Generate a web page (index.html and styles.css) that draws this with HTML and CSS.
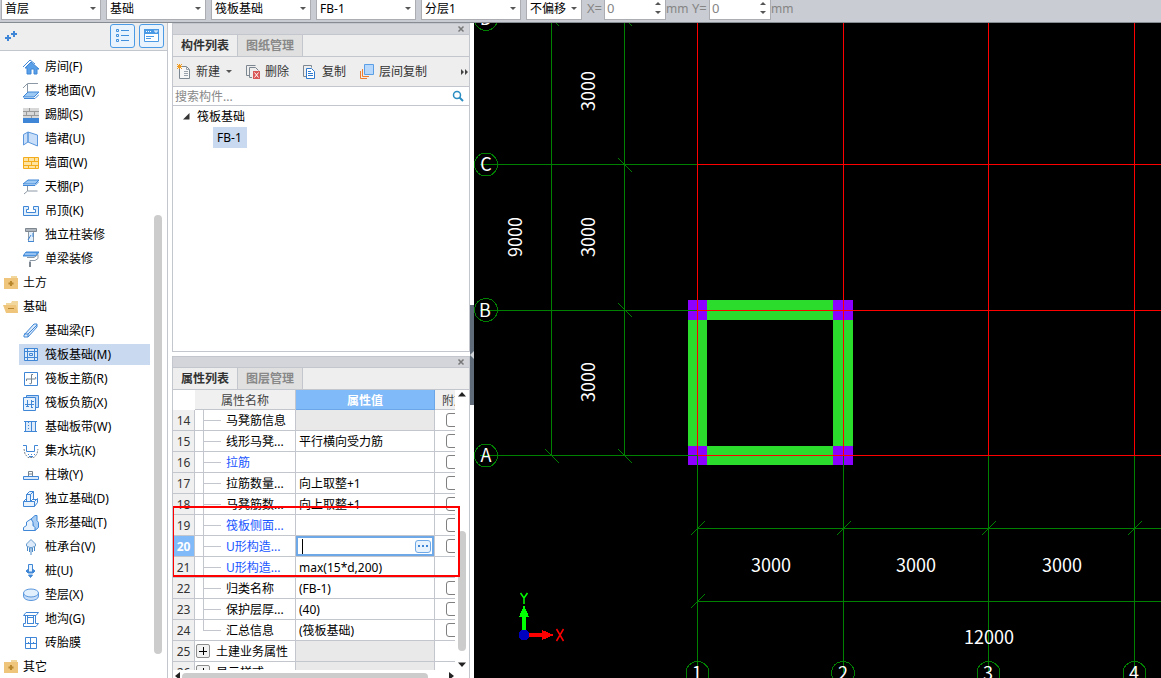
FILE: index.html
```html
<!DOCTYPE html>
<html lang="zh-CN">
<head>
<meta charset="utf-8">
<title>筏板基础</title>
<link rel="stylesheet" href="styles.css">
</head>
<body>
<header class="topbar">
  <span class="combo"><select aria-label="楼层"><option>首层</option></select></span>
  <span class="combo"><select aria-label="分类"><option>基础</option></select></span>
  <span class="combo"><select aria-label="构件类型"><option>筏板基础</option></select></span>
  <span class="combo"><select aria-label="构件"><option>FB-1</option></select></span>
  <span class="combo"><select aria-label="分层"><option>分层1</option></select></span>
  <span class="combo combo-small"><select aria-label="偏移"><option>不偏移</option></select></span>
  <div class="offsets">
    <label for="off-x">X=</label><span class="spin"><input id="off-x" type="text" value="0"></span><span class="unit">mm</span>
    <label for="off-y">Y=</label><span class="spin"><input id="off-y" type="text" value="0"></span><span class="unit">mm</span>
  </div>
</header>
<main class="work">
  <nav class="sidebar">
    <div class="side-head">
      <svg class="plus" width="14" height="14" viewBox="0 0 14 14"><path d="M0 9h6M3 6v6M6 5h6M9 2v6" stroke="#3f87d6" stroke-width="2"/></svg>
      <button class="view" aria-label="列表"><svg width="16" height="16" viewBox="0 0 16 16" fill="none" stroke="#3f8fdc"><path d="M1.500 1.500h2v2h-2zM1.500 6.500h2v2h-2zM1.500 11.500h2v2h-2zM6 2.500h8M6 7.500h8M6 12.500h8"/></svg></button>
      <button class="view" aria-label="窗口"><svg width="16" height="16" viewBox="0 0 16 16" fill="none"><path d="M.5 1.500h14v12H.5z" fill="#fff" stroke="#4a9ae6"/><path d="M0 1h15v5H0z" fill="#4a9ae6"/><path d="M2 3.500h1M4 3.500h1M6 3.500h1M10 3h4M12 3v2" stroke="#fff"/><path d="M2 8.500h8M2 10.500h5" stroke="#4a9ae6"/></svg></button>
    </div>
    <div class="side-body">
      <ul class="items">
        <li><a href="#"><svg viewBox="0 0 16 16"><path d="M0 8L7 1l5 4" fill="none" stroke="#3f87d6"/><path d="M2 9l6-6 8 7h-2v5h-3v-5H8v5H4V9z" fill="#5aa0e8" stroke="#3f87d6"/></svg>房间(F)</a></li>
        <li><a href="#"><svg viewBox="0 0 16 16" fill="none"><path d="M15 .5H4.500V10M4 1L0 5" stroke="#8c98a5"/><path d="M5 9h11l-5 5H0z" fill="#9cc8f4" stroke="#3f87d6"/><path d="M1 15.500h11l4-4" stroke="#3f87d6"/></svg>楼地面(V)</a></li>
        <li><a href="#"><svg viewBox="0 0 16 16"><path d="M0 1h16v10H0z" fill="#d8d8d8"/><path d="M0 4.500h16M0 8.500h16M6.500 1v3M11.500 4v4M3.500 4v4M8.500 8v3" stroke="#9a9a9a"/><path d="M0 11h16v5H0z" fill="#3f87d6"/></svg>踢脚(S)</a></li>
        <li><a href="#"><svg viewBox="0 0 16 16" fill="#c9def8" stroke="#5a97dd"><path d="M.5 3.500L5 1v10L.5 14zM5 1l9.500 3v11L5 11z"/></svg>墙裙(U)</a></li>
        <li><a href="#"><svg viewBox="0 0 16 16"><path d="M.5 2.500h15v11H.5z" fill="#ffe3a0" stroke="#f3ac1c"/><path d="M0 6.500h16M0 10.500h16M5.500 2v4M11.500 2v4M8.500 6v4M5.500 10v4M12.500 10v4" stroke="#f3ac1c"/></svg>墙面(W)</a></li>
        <li><a href="#"><svg viewBox="0 0 16 16" fill="none"><path d="M5 1h11l-4 4H0z" fill="#9cc8f4" stroke="#3f87d6"/><path d="M0 6.500h12l4-4" stroke="#3f87d6"/><path d="M4.500 7v5h10M4.500 12L1 15" stroke="#8c98a5"/></svg>天棚(P)</a></li>
        <li><a href="#"><svg viewBox="0 0 16 16"><path d="M.5 3.500h5v3h-2v3h9v-3h-2v-3h5v9H.5z" fill="#e2effc" stroke="#3f87d6"/></svg>吊顶(K)</a></li>
        <li><a href="#"><svg viewBox="0 0 16 16"><path d="M2.500 1.500h11v3h-11z" fill="#aeb5bd" stroke="#7e8790"/><path d="M5.500 5v9.500h5V5" fill="#e2effc" stroke="#8c98a5"/><path d="M5 14.500h6M8 8l-3 5M10 6v4" stroke="#3f87d6"/></svg>独立柱装修</a></li>
        <li><a href="#"><svg viewBox="0 0 16 16" fill="none"><path d="M3 1h13l-3 4H0z" fill="#5aa0e8" stroke="#3f87d6"/><path d="M2 3h11" stroke="#cfe2f8"/><path d="M4 6.500h7l4-3v4l-3 2H7v3" stroke="#8c98a5"/><path d="M7 11v5" stroke="#7e8790" stroke-width="2"/></svg>单梁装修</a></li>
        <li class="group"><a href="#"><svg viewBox="0 0 16 16"><path d="M8 1h6v3H8z" fill="#f2d79c"/><path d="M1 3h14v11H1z" fill="#eec57a"/><path d="M8 6v5M5.500 8.500h5" stroke="#b8862c" stroke-width="2"/></svg>土方</a></li>
        <li class="group"><a href="#"><svg viewBox="0 0 16 16"><path d="M3 4h5l1-2h6v12H3z" fill="#f2d79c"/><path d="M0 6h13l2 8H3z" fill="#eec57a"/><path d="M5 9.500h6" stroke="#b8862c"/></svg>基础</a></li>
        <li><a href="#"><svg viewBox="0 0 16 16"><path d="M1 12L11 1h3v3L5 14H1z" fill="#dceafa" stroke="#3f87d6"/><path d="M1 11h4v3M5 11l9-9" fill="none" stroke="#3f87d6"/></svg>基础梁(F)</a></li>
        <li class="selected"><a href="#"><svg viewBox="0 0 16 16"><path d="M1.500 1.500h13v12h-13z" fill="#dceafa" stroke="#3f87d6"/><path d="M4.500 1v13M11.500 1v13M1 4.500h14M1 10.500h14M6.500 6.500h3v2h-3z" fill="none" stroke="#3f87d6"/></svg>筏板基础(M)</a></li>
        <li><a href="#"><svg viewBox="0 0 16 16" fill="none"><path d="M1.500 1.500h13v13h-13z" stroke="#3f87d6"/><path d="M10 3.500H8.500V12q0 1.500-2 .5M3.500 10V8H12q1.500 0 .5-2" stroke="#75838f"/></svg>筏板主筋(R)</a></li>
        <li><a href="#"><svg viewBox="0 0 16 16"><path d="M3.500.5h12v12h-12z" fill="#bcd8f6" stroke="#3f87d6"/><path d="M.5 2.500h12v13H.5z" fill="#e8f2fd" stroke="#3f87d6"/><path d="M4.500 5v7M8.500 5v7M2 9.500h9M3 11.500h3M8 6.500h3M8 12.500h2" fill="none" stroke="#3f87d6"/></svg>筏板负筋(X)</a></li>
        <li><a href="#"><svg viewBox="0 0 16 16"><path d="M3 3h9v10H3z" fill="#dceafa"/><path d="M1 2.500h13M1 12.500h13M2.500 3v10M8.500 3v10M12.500 3v10" stroke="#3f87d6"/><path d="M5.500 3v10" stroke="#3f87d6" stroke-dasharray="1 2"/></svg>基础板带(W)</a></li>
        <li><a href="#"><svg viewBox="0 0 16 16" fill="none"><path d="M0 2.500h3.500v6h8v-6H15" stroke="#3f87d6"/><path d="M1 6l1 5 3 3.500h6l3-3.500 1-5" stroke="#75838f" stroke-dasharray="2 1"/><path d="M5 11.500h1M8 11.500h1M11 11.500h1M6 13.500h4" stroke="#3f87d6"/></svg>集水坑(K)</a></li>
        <li><a href="#"><svg viewBox="0 0 16 16"><path d="M5.500 9.500V4.500h4v5M6 7h4" fill="none" stroke="#75838f"/><path d="M.5 9.500h15v3H.5z" fill="#dceafa" stroke="#3f87d6"/></svg>柱墩(Y)</a></li>
        <li><a href="#"><svg viewBox="0 0 16 16" fill="#e8f2fd" stroke="#3f87d6"><path d="M.5 10.500h11v5H.5zM11.500 10.500l3-3v4l-3 4M.5 10.500l3-3M3.500 10.500v-7l3-3h4v8M3.500 3.500h4v7l3-3M7.500 3.500l3-3M10 8.500h4"/></svg>独立基础(D)</a></li>
        <li><a href="#"><svg viewBox="0 0 16 16" fill="#e8f2fd" stroke="#3f87d6"><path d="M8 4l4-3.500h2v5l1.500 2v5l-3.500 3z" fill="#a9cdf3"/><path d="M.5 15.500v-3l3-2V7L8 4l2 3v3.500l2 2v3z"/></svg>条形基础(T)</a></li>
        <li><a href="#"><svg viewBox="0 0 16 16"><path d="M8 .5L12.500 5v2L8 9 3.500 7V5z" fill="#dceafa" stroke="#6c9fce"/><path d="M8 8v8M4.500 8v4M11.500 8v4M6.500 9v4M9.500 9v4" stroke="#4a89c8"/></svg>桩承台(V)</a></li>
        <li><a href="#"><svg viewBox="0 0 16 16" stroke="#3f87d6"><path d="M5.500 1.500h4v8h-4z" fill="#e8f2fd"/><path d="M5.500 6L3 8l2 2h5l2-2-2.500-2v3h-4z" fill="#3f87d6"/><path d="M5.500 12h4l-2 2.500z" fill="#3f87d6"/></svg>桩(U)</a></li>
        <li><a href="#"><svg viewBox="0 0 16 16" fill="#c9def8" stroke="#5a97dd"><path d="M.5 6v3c0 6 15 6 15 0V6"/><ellipse cx="8" cy="6" rx="7.500" ry="4" fill="#e2effc"/></svg>垫层(X)</a></li>
        <li><a href="#"><svg viewBox="0 0 16 16" fill="none" stroke="#3f87d6"><path d="M3 1.500h12.500l-2.500 3H.5z" fill="#fff"/><path d="M2.500 5v7.500h-2v3H13l2.500-3H12.500V5M4.500 5v8M10.500 5v8M5 6.500h5M5 12.500h5"/></svg>地沟(G)</a></li>
        <li><a href="#"><svg viewBox="0 0 16 16" fill="none" stroke="#3f87d6"><path d="M2.500 2.500h11v11h-11zM7.500 2v12M2 8.500h12"/><path d="M5 7.500h1M10 7.500h1"/></svg>砖胎膜</a></li>
        <li class="group"><a href="#"><svg viewBox="0 0 16 16"><path d="M8 1h6v3H8z" fill="#f2d79c"/><path d="M1 3h14v11H1z" fill="#eec57a"/><path d="M8 6v5M5.500 8.500h5" stroke="#b8862c" stroke-width="2"/></svg>其它</a></li>
      </ul>
      <div class="side-scroll"><div class="thumb"></div></div>
    </div>
  </nav>

  <div class="docks">
    <section class="panel panel-list">
      <div class="strip"><button class="close" aria-label="关闭"><svg width="8" height="8" viewBox="0 0 8 8"><path d="M1.500 1.500l5 5M6.500 1.500l-5 5" stroke="#777" stroke-width="1.500"/></svg></button></div>
      <div class="tabs"><button class="tab active">构件列表</button><button class="tab">图纸管理</button></div>
      <div class="tools">
        <button class="tool"><svg width="16" height="16" viewBox="0 0 16 16"><path d="M2.500 3.500v11h10v-9l-3-3H5" fill="#f6f6f6" stroke="#7c8791"/><path d="M9.500 2.500v3h3M7 7.500h4M7 9.500h4M7 11.500h4" fill="none" stroke="#9aa3ab"/><path d="M0 0l5 5M5 0L0 5M2.500 0v5M0 2.500h5" stroke="#f09a20"/></svg>新建<i class="caret"></i></button>
        <button class="tool"><svg width="16" height="16" viewBox="0 0 16 16" fill="none"><path d="M3 11.500H.5V1.500h9M6 13.500H3.500v-10h6l3 3" stroke="#7c8791"/><path d="M7 7h7v8H7z" fill="#d95757"/><path d="M8.500 8.500l4 5M12.500 8.500l-4 5" stroke="#fff"/></svg>删除</button>
        <button class="tool"><svg width="16" height="16" viewBox="0 0 16 16" fill="none"><path d="M3 12.500H.5v-11h8v2" stroke="#7c8791"/><path d="M3.500 4.500h5l3 3v7h-8z" fill="#fff" stroke="#2f79cf"/><path d="M5 7.500h3M5 9.500h5M5 11.500h5" stroke="#2f79cf"/></svg>复制</button>
        <button class="tool"><svg width="16" height="16" viewBox="0 0 16 16" fill="none"><path d="M.5 7v7.500H7M2.500 5v7.500H9" stroke="#ed7d31"/><path d="M4.500.5h9v10h-9z" fill="#b7d8fb" stroke="#5a9ee6"/></svg>层间复制</button>
        <button class="more" aria-label="更多"><svg width="8" height="6" viewBox="0 0 8 6"><path d="M0 0l3 3-3 3zM4 0l3 3-3 3z" fill="#444"/></svg></button>
      </div>
      <div class="search">
        <input type="text" aria-label="搜索构件" placeholder="搜索构件...">
        <svg width="12" height="12" viewBox="0 0 12 12" fill="none" stroke="#2a8cc0"><circle cx="5" cy="5" r="3.500" stroke-width="1.500"/><path d="M7.500 7.500L11 11" stroke-width="2"/></svg>
      </div>
      <div class="tree">
        <div class="node"><svg width="7" height="7" viewBox="0 0 7 7"><path d="M6.500 0v6.500H0z" fill="#333"/></svg>筏板基础</div>
        <div class="node child"><span class="picked">FB-1</span></div>
      </div>
    </section>

    <section class="panel panel-props">
      <div class="strip"><button class="close" aria-label="关闭"><svg width="8" height="8" viewBox="0 0 8 8"><path d="M1.500 1.500l5 5M6.500 1.500l-5 5" stroke="#777" stroke-width="1.500"/></svg></button></div>
      <div class="tabs"><button class="tab active">属性列表</button><button class="tab">图层管理</button></div>
      <div class="grid-area">
        <div class="grid-clip">
          <table class="props">
            <colgroup><col class="c-no"><col class="c-name"><col class="c-value"><col class="c-extra"></colgroup>
            <thead><tr><td class="corner"></td><th>属性名称</th><th class="hot">属性值</th><th class="extra">附加</th></tr></thead>
            <tbody>
              <tr><th>14</th><td class="leaf">马凳筋信息</td><td class="off"></td><td class="extra"><input type="checkbox" aria-label="附加 14"></td></tr>
              <tr><th>15</th><td class="leaf">线形马凳...</td><td>平行横向受力筋</td><td class="extra"><input type="checkbox" aria-label="附加 15"></td></tr>
              <tr><th>16</th><td class="leaf blue">拉筋</td><td></td><td class="extra"><input type="checkbox" aria-label="附加 16"></td></tr>
              <tr><th>17</th><td class="leaf">拉筋数量...</td><td>向上取整+1</td><td class="extra"><input type="checkbox" aria-label="附加 17"></td></tr>
              <tr><th>18</th><td class="leaf">马凳筋数...</td><td>向上取整+1</td><td class="extra"><input type="checkbox" aria-label="附加 18"></td></tr>
              <tr><th>19</th><td class="leaf blue">筏板侧面...</td><td></td><td class="extra"><input type="checkbox" aria-label="附加 19"></td></tr>
              <tr><th class="current">20</th><td class="leaf blue">U形构造...</td><td class="editing"><div class="editor"><i class="cursor"></i><input type="text" aria-label="U形构造"><button class="dots" aria-label="更多"><svg width="10" height="2" viewBox="0 0 10 2"><path d="M0 0h2v2H0zM4 0h2v2H4zM8 0h2v2H8z" fill="#3f87d6"/></svg></button></div></td><td class="extra"><input type="checkbox" aria-label="附加 20"></td></tr>
              <tr><th>21</th><td class="leaf blue">U形构造...</td><td>max(15*d,200)</td><td class="extra"></td></tr>
              <tr><th>22</th><td class="leaf">归类名称</td><td>(FB-1)</td><td class="extra"><input type="checkbox" aria-label="附加 22"></td></tr>
              <tr><th>23</th><td class="leaf">保护层厚...</td><td>(40)</td><td class="extra"><input type="checkbox" aria-label="附加 23"></td></tr>
              <tr><th>24</th><td class="leaf last">汇总信息</td><td>(筏板基础)</td><td class="extra"><input type="checkbox" aria-label="附加 24"></td></tr>
              <tr><th>25</th><td class="branch"><button class="expand" aria-label="展开"></button>土建业务属性</td><td class="off"></td><td class="extra"></td></tr>
              <tr><th>26</th><td class="branch"><button class="expand" aria-label="展开"></button>显示样式</td><td class="off"></td><td class="extra"></td></tr>
            </tbody>
          </table>
        </div>
        <div class="vscroll"><svg width="8" height="5" viewBox="0 0 8 5"><path d="M0 4.500L4 0l4 4.500z" fill="#222"/></svg><div class="vtrack"><div class="vthumb"></div></div><svg width="8" height="5" viewBox="0 0 8 5"><path d="M0 .5h8L4 5z" fill="#222"/></svg></div>
        <div class="mark"></div>
      </div>
      <div class="hscroll"><svg width="5" height="8" viewBox="0 0 5 8"><path d="M5 0v8L0 4z" fill="#222"/></svg><div class="htrack"><div class="hthumb"></div></div><svg width="5" height="8" viewBox="0 0 5 8"><path d="M0 0v8l5-4z" fill="#222"/></svg></div>
    </section>
  </div>

  <div class="splitter"><button class="fold" aria-label="折叠"><svg width="4" height="8" viewBox="0 0 4 8"><path d="M4 0v8L0 4z" fill="#cfd3d8"/></svg></button></div>

  <section class="viewport">
    <svg class="drawing" width="100%" height="100%">
      <g transform="translate(-474 -23)">
        <path fill="#2cdc2c" d="M688 300h165v20H688zM688 446h165v19H688zM688 320h19v126h-19zM833 320h20v126h-20z"/>
        <path fill="#8c00ff" d="M688 300h19v20h-19zM833 300h20v20h-20zM688 446h19v19h-19zM833 446h20v19h-20z"/>
        <g fill="none" stroke="#008000">
          <path d="M551.500 0v456M624.500 0v456M480 164.500h218M480 310.500h218M480 455.500h218M697.500 455v220M843.500 455v218M988.500 455v218M1134.500 455v218M697 528.500h3000M697 601.500h3000"/>
          <path d="M545 12l14 14M618 12l14 14M618 158l14 14M618 303l14 14M618 449l14 14M545 449l14 14M691 535l14-14M691 608l14-14M837 535l14-14M982 535l14-14M1128 535l14-14"/>
          <circle cx="486" cy="19" r="11.500"/><circle cx="486" cy="164.500" r="11.500"/><circle cx="486" cy="310" r="11.500"/><circle cx="486" cy="455.500" r="11.500"/><circle cx="697.500" cy="673" r="11.500"/><circle cx="843" cy="673" r="11.500"/><circle cx="988.500" cy="673" r="11.500"/><circle cx="1134.500" cy="673" r="11.500"/>
        </g>
        <path stroke="#ff0000" fill="none" d="M697.500 0v455M843.500 0v455M988.500 0v455M1134.500 0v455M698 164.500h3000M698 310.500h3000M698 455.500h3000"/>
        <g class="dims">
          <text x="486" y="25">D</text><text x="486" y="171">C</text><text x="485" y="317">B</text><text x="486" y="462">A</text>
          <text x="697" y="680">1</text><text x="843" y="680">2</text><text x="988" y="680">3</text><text x="1134" y="680">4</text>
          <text x="771" y="572">3000</text><text x="916" y="572">3000</text><text x="1062" y="572">3000</text><text x="989" y="644">12000</text>
          <text transform="translate(595 91) rotate(-90)">3000</text><text transform="translate(595 237) rotate(-90)">3000</text><text transform="translate(595 382) rotate(-90)">3000</text><text transform="translate(522 237) rotate(-90)">9000</text>
        </g>
        <path d="M522 617h4v14h-4zM519 617l5-12 5 12z" fill="#00ff00"/>
        <path d="M528 633h14v4h-14zM542 630l12 5-12 5z" fill="#ff0000"/>
        <circle cx="524" cy="635" r="5.500" fill="#0000c0"/>
        <path class="axis" d="M520.500 593l3.500 5v6M527.500 593l-3.500 5" stroke="#00ff00"/>
        <path class="axis" d="M556.500 629l7 12M563.500 629l-7 12" stroke="#ff0000"/>
      </g>
    </svg>
  </section>
</main>
</body>
</html>
```
FILE: styles.css
```css
* { box-sizing: border-box; }
html, body { height: 100%; }
body {
  margin: 0;
  display: flex;
  flex-direction: column;
  overflow: hidden;
  background: #fff;
  color: #000;
  font: 12px/20px "Noto Sans", "Noto Sans CJK SC", sans-serif;
}
button, input, select { font: inherit; color: inherit; margin: 0; padding: 0; border: 0; background: none; outline: 0; }
a { color: inherit; text-decoration: none; }
svg { flex: none; display: block; }
ul { list-style: none; margin: 0; padding: 0; }

/* top bar */
.topbar {
  flex: none;
  display: flex;
  align-items: flex-start;
  gap: 5px;
  height: 23px;
  padding-left: 1px;
  background: #c9ccd2;
  border-bottom: 1px solid #868c92;
  overflow: hidden;
}
.combo { position: relative; flex: none; width: 100px; height: 20px; background: #fff; border: 1px solid #abadb3; border-top: 0; }
.combo-small { width: 56px; }
.combo select { appearance: none; display: block; width: 100%; height: 17px; padding-left: 3px; line-height: 17px; }
.combo::after { content: ""; position: absolute; right: 4px; top: 7px; border: 3px solid transparent; border-top-color: #555; border-bottom: 0; }
.offsets { display: flex; height: 17px; line-height: 17px; color: #858585; white-space: nowrap; }
.offsets label { width: 17px; font-size: 13px; }
.spin { position: relative; width: 62px; height: 20px; background: #fff; border: 1px solid #abadb3; border-top: 0; }
.spin input { display: block; width: 44px; height: 17px; padding-left: 2px; font-size: 13px; }
.spin::before, .spin::after { content: ""; position: absolute; right: 4px; border: 3px solid transparent; }
.spin::before { top: 2px; border-bottom-color: #555; border-top: 0; }
.spin::after { top: 11px; border-top-color: #555; border-bottom: 0; }
.unit { width: 26px; }

.work { flex: 1; min-height: 0; display: flex; }

/* component navigator */
.sidebar { flex: none; width: 168px; display: flex; flex-direction: column; border-right: 1px solid #c3c6cc; }
.side-head { flex: none; display: flex; align-items: center; gap: 4px; height: 28px; padding: 0 3px 2px 5px; background: #eee; border-bottom: 1px solid #c3c6cc; }
.side-head .plus { margin-right: auto; }
.view { display: flex; align-items: center; justify-content: center; width: 25px; height: 24px; background: #e8f3fd; border: 1px solid #4a9ae6; border-radius: 3px; }
.side-body { flex: 1; min-height: 0; display: flex; padding-top: 4px; overflow: hidden; }
.items { flex: 1; padding-left: 19px; }
.items a { display: flex; align-items: center; gap: 6px; height: 24px; padding-left: 4px; white-space: nowrap; }
.items svg { width: 16px; height: 16px; }
.items .group { margin-left: -19px; }
.items .group a { gap: 4px; padding-left: 3px; }
.items .selected a { background: linear-gradient(#c9d9ef, #c9d9ef) 0 1px / 100% 21px no-repeat; }
.side-scroll { flex: none; width: 17px; padding: 160px 5px 24px 4px; }
.side-scroll .thumb { height: 100%; background: #ccc; border-radius: 4px; }

/* docked panels */
.docks { flex: none; width: 298px; margin-left: 4px; display: flex; flex-direction: column; gap: 4px; }
.panel { min-height: 0; display: flex; flex-direction: column; border: 1px solid #c3c6cc; overflow: hidden; }
.panel-list { flex: 329 1 0; }
.panel-props { flex: 322 1 0; border-bottom: 0; }
.strip { flex: none; display: flex; justify-content: flex-end; align-items: center; height: 11px; padding-right: 4px; background: #d3d5da; border-bottom: 1px solid #c3c6cc; }
.tabs { flex: none; display: flex; height: 22px; background: #eee; border-bottom: 1px solid #c3c6cc; }
.tab { width: 65px; font-weight: bold; line-height: 20px; color: #888; background: #e0e0e0; border-right: 1px solid #c3c6cc; }
.tab.active { color: #333; background: #eee; }
.tools { flex: none; display: flex; align-items: center; gap: 14px; height: 30px; padding-left: 4px; color: #333; background: #eee; border-bottom: 1px solid #c3c6cc; }
.tool { display: flex; align-items: center; gap: 3px; white-space: nowrap; }
.caret { margin-left: 3px; border: 3px solid transparent; border-top-color: #555; border-bottom: 0; }
.more { margin-left: auto; }
.search { flex: none; display: flex; align-items: center; height: 19px; padding: 0 5px 0 2px; border-bottom: 1px solid #c3c6cc; }
.search input { flex: 1; min-width: 0; height: 18px; padding-top: 1px; }
.search input::placeholder { color: #888; opacity: 1; }
.tree { flex: 1; background: #fff; }
.node { display: flex; align-items: center; gap: 7px; height: 21px; padding-left: 10px; }
.child { padding-left: 40px; }
.picked { height: 21px; padding: 1px 5px 0 4px; background: #c9d9ef; }

/* property grid */
.grid-area { position: relative; flex: 1; min-height: 0; display: flex; }
.grid-clip { flex: 1; min-width: 0; overflow: hidden; }
.props { width: 322px; table-layout: fixed; border-collapse: separate; border-spacing: 0; }
.c-no { width: 22px; }
.c-name { width: 101px; }
.c-value { width: 139px; }
.c-extra { width: 60px; }
.props th, .props td { height: 21px; padding: 2px 0 0 3px; line-height: 18px; border-right: 1px solid #c3c6cc; border-bottom: 1px solid #c3c6cc; overflow: hidden; white-space: nowrap; text-align: left; font-weight: normal; }
.props tbody th { padding-left: 0; text-align: center; color: #333; background: #f0f0f0; }
.props thead th, .props thead td { height: 20px; padding: 2px 0 0; line-height: 17px; text-align: center; color: #444; background: #f0f0f0; }
.props thead .corner { background: #fff; border-color: transparent; }
.props thead .hot { color: #fff; font-weight: bold; background: #80baf8; border-color: #6aa6e8; }
.props thead .extra { padding-left: 7px; text-align: left; }
.props tbody .extra { padding: 0 0 0 11px; }
.props tbody .current { color: #fff; font-weight: bold; background: #80baf8; }
.props .leaf { padding-left: 31px; background: linear-gradient(#c3c6cc, #c3c6cc) 8px 0 / 1px 100% no-repeat, linear-gradient(#c3c6cc, #c3c6cc) 8px 10px / 18px 1px no-repeat; }
.props .last { background-size: 1px 10px, 18px 1px; }
.props .blue { color: #1a56ff; }
.props .off { background: #e9e9e9; }
.props .branch { padding-left: 1px; }
.props input[type="checkbox"] { appearance: none; display: block; width: 14px; height: 14px; border: 1px solid #808080; border-radius: 3px; background: #fff; }
.expand { float: left; width: 14px; height: 14px; margin: 1px 6px 0 0; border: 1px solid #8c8c8c; border-radius: 2px; background: linear-gradient(#000, #000) center / 8px 1px no-repeat, linear-gradient(#000, #000) center / 1px 8px no-repeat, #f2f2f2; }
.props .editing { padding: 0; }
.editor { display: flex; align-items: center; height: 20px; padding: 0 1px 0 4px; border: 2px solid #6fa8e6; background: #fff; }
.editor input { flex: 1; min-width: 0; height: 16px; }
.cursor { width: 1px; height: 15px; background: #000; }
.dots { display: flex; align-items: center; justify-content: center; width: 16px; height: 13px; background: #e8f3fd; border: 1px solid #6fa8e6; border-radius: 3px; }
.vscroll { flex: none; width: 14px; display: flex; flex-direction: column; align-items: center; padding: 2px 0 3px; }
.vtrack { flex: 1; width: 8px; padding: 134px 0 11px; }
.vthumb { height: 100%; background: #ccc; border-radius: 4px; }
.hscroll { flex: none; display: flex; align-items: flex-start; height: 8px; padding: 2px 15px 0 2px; overflow: hidden; }
.htrack { flex: 1; padding: 1px 21px 0 2px; }
.hthumb { height: 8px; background: #ccc; border-radius: 4px; }
.mark { position: absolute; left: -1px; top: 116px; width: 288px; height: 71px; border: 2px solid #f00; pointer-events: none; }

/* splitter and model view */
.splitter { flex: none; width: 4px; padding-top: 282px; }
.fold { display: flex; align-items: center; width: 4px; height: 100px; background: #5f6b78; }
.viewport { flex: 1; min-width: 0; overflow: hidden; background: #000; }
.drawing { shape-rendering: crispEdges; }
.dims { fill: #fff; font: 18px "Noto Sans CJK SC", sans-serif; text-anchor: middle; }
.axis { fill: none; stroke-width: 1.5; shape-rendering: auto; }
```
